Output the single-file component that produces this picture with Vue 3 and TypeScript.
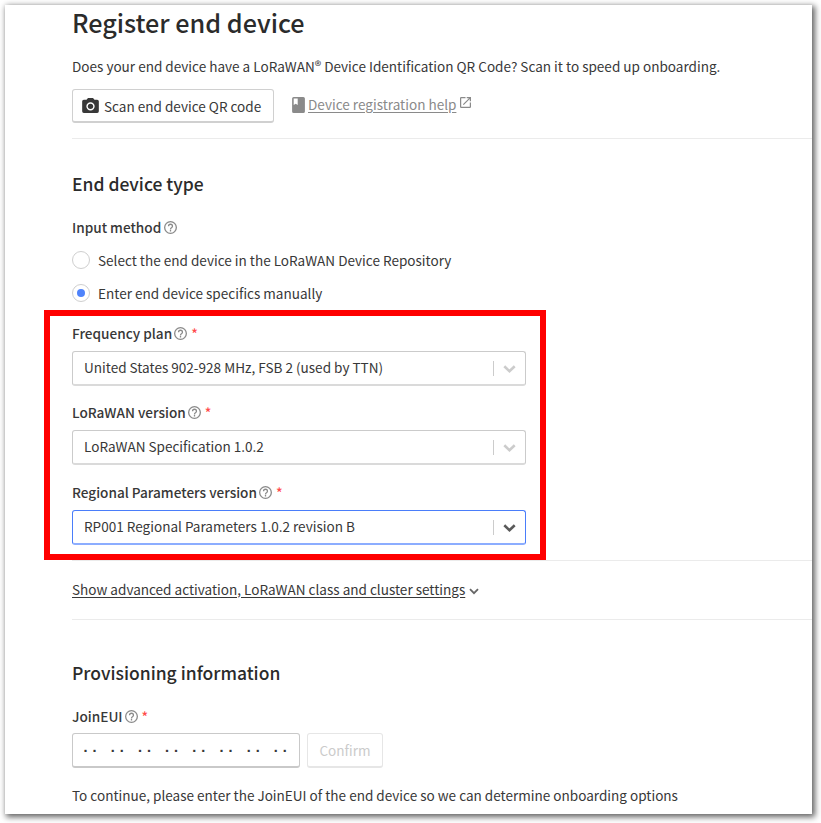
<script setup lang="ts">
import { ref } from 'vue'

interface SelectField {
  key: string
  label: string
  value: string
  focused: boolean
}

const methods = [
  { key: 'repository', label: 'Select the end device in the LoRaWAN Device Repository' },
  { key: 'manual', label: 'Enter end device specifics manually' },
]
const method = ref('manual')

const fields: SelectField[] = [
  { key: 'frequency', label: 'Frequency plan', value: 'United States 902-928 MHz, FSB 2 (used by TTN)', focused: false },
  { key: 'version', label: 'LoRaWAN version', value: 'LoRaWAN Specification 1.0.2', focused: false },
  { key: 'regional', label: 'Regional Parameters version', value: 'RP001 Regional Parameters 1.0.2 revision B', focused: true },
]
</script>

<template>
  <main class="card">
    <h1>Register end device</h1>
    <p class="intro">Does your end device have a LoRaWAN<sup>®</sup> Device Identification QR Code? Scan it to speed up onboarding.</p>
    <div class="actions">
      <button class="scan">
        <svg class="camera" viewBox="2 2 20 18"><path fill-rule="evenodd" d="M9 2 7.200 4H4a2 2 0 0 0-2 2v12a2 2 0 0 0 2 2h16a2 2 0 0 0 2-2V6a2 2 0 0 0-2-2h-3.200L15 2zM12 7a5 5 0 1 1 0 10 5 5 0 0 1 0-10z" /><circle cx="12" cy="12" r="3.200" /></svg>
        <span>Scan end device QR code</span>
      </button>
      <a class="help-link">
        <svg class="book" viewBox="4 2 16 20"><path d="M18 2H6a2 2 0 0 0-2 2v16a2 2 0 0 0 2 2h12a2 2 0 0 0 2-2V4a2 2 0 0 0-2-2zM6 4h5v8l-2.500-1.500L6 12z" /></svg>
        <span>Device registration help</span>
        <svg class="external" viewBox="3 3 18 18"><path d="M19 19H5V5h7V3H5a2 2 0 0 0-2 2v14a2 2 0 0 0 2 2h14a2 2 0 0 0 2-2v-7h-2zM14 3v2h3.590l-9.830 9.830 1.410 1.410L19 6.410V10h2V3z" /></svg>
      </a>
    </div>
    <hr class="rule-top">

    <h2 class="type-title">End device type</h2>
    <div class="label method-label">
      <span>Input method</span>
      <svg class="hint" viewBox="2 2 20 20"><path d="M11 18h2v-2h-2zM12 2a10 10 0 1 0 0 20 10 10 0 0 0 0-20zm0 18a8 8 0 1 1 0-16 8 8 0 0 1 0 16zm0-14a4 4 0 0 0-4 4h2a2 2 0 1 1 4 0c0 2-3 1.750-3 5h2c0-2.250 3-2.500 3-5a4 4 0 0 0-4-4z" /></svg>
    </div>
    <div class="radios">
      <div v-for="m in methods" :key="m.key" class="radio-row" @click="method = m.key">
        <span class="radio"><i v-if="method === m.key" /></span>
        <span class="radio-text">{{ m.label }}</span>
      </div>
    </div>

    <section class="fields">
      <div v-for="f in fields" :key="f.key" class="field" :class="f.key">
        <div class="label">
          <span>{{ f.label }}</span>
          <svg class="hint" viewBox="2 2 20 20"><path d="M11 18h2v-2h-2zM12 2a10 10 0 1 0 0 20 10 10 0 0 0 0-20zm0 18a8 8 0 1 1 0-16 8 8 0 0 1 0 16zm0-14a4 4 0 0 0-4 4h2a2 2 0 1 1 4 0c0 2-3 1.750-3 5h2c0-2.250 3-2.500 3-5a4 4 0 0 0-4-4z" /></svg>
          <b>*</b>
        </div>
        <div class="select" :class="{ focused: f.focused }">
          <span class="value">{{ f.value }}</span>
          <span class="separator" />
          <svg class="chevron" viewBox="0 0 13 8"><path d="m1.300 1.200 5.200 5 5.200-5" /></svg>
        </div>
      </div>
    </section>

    <div class="advanced">
      <a>Show advanced activation, LoRaWAN class and cluster settings</a>
      <svg viewBox="0 0 10 7"><path d="m1 1.200 4 4 4-4" /></svg>
    </div>

    <h2 class="provision-title">Provisioning information</h2>
    <div class="label join-label">
      <span>JoinEUI</span>
      <svg class="hint" viewBox="2 2 20 20"><path d="M11 18h2v-2h-2zM12 2a10 10 0 1 0 0 20 10 10 0 0 0 0-20zm0 18a8 8 0 1 1 0-16 8 8 0 0 1 0 16zm0-14a4 4 0 0 0-4 4h2a2 2 0 1 1 4 0c0 2-3 1.750-3 5h2c0-2.250 3-2.500 3-5a4 4 0 0 0-4-4z" /></svg>
      <b>*</b>
    </div>
    <div class="join-row">
      <div class="eui"><span v-for="n in 8" :key="n">··</span></div>
      <button class="confirm" disabled>Confirm</button>
    </div>
    <p class="note">To continue, please enter the JoinEUI of the end device so we can determine onboarding options</p>
    <div class="highlight" />
  </main>
</template>

<style>
body {
  background: #fff;
  overflow: hidden;
}
</style>

<style scoped>
* {
  box-sizing: border-box;
}
.card {
  position: relative;
  display: flow-root;
  width: 807px;
  height: 809px;
  margin: 5px 0 9px 5px;
  padding-left: 67px;
  background: #fff;
  box-shadow: 2px 2px 6px 1px rgba(0, 0, 0, 0.62);
  color: #383838;
  font: 13.56px/20px "Noto Sans CJK SC", "Noto Sans", sans-serif;
  white-space: nowrap;
}
svg {
  display: block;
  flex: none;
  fill: currentColor;
}
h1,
h2,
p {
  margin: 0;
}
h1 {
  color: #2b2b2b;
  font-size: 25.2px;
  font-weight: 500;
  line-height: 34px;
}
h2 {
  height: 25px;
  color: #2b2b2b;
  font-size: 17.5px;
  font-weight: 500;
  line-height: 25px;
}
.intro {
  height: 20px;
  margin-top: 17px;
}
sup {
  font-size: 13.5px;
  line-height: 0;
  vertical-align: 1px;
}
.actions {
  display: flex;
  align-items: center;
  height: 34px;
  margin-top: 13px;
}
button {
  display: flex;
  align-items: center;
  height: 35px;
  margin: 0;
  padding: 0;
  border: 1px solid #d0d0d0;
  border-bottom-width: 2px;
  border-radius: 3px;
  background: #fff;
  color: inherit;
  font: inherit;
}
.scan {
  width: 202px;
  height: 34px;
  padding-left: 9px;
}
.camera {
  width: 17px;
  height: 15px;
  margin: -1px 5px 0 0;
}
.help-link {
  display: flex;
  align-items: center;
  height: 20px;
  margin: -4px 0 0 18px;
  color: #8a8a8a;
}
.help-link span {
  text-decoration: underline;
  text-underline-offset: 2px;
}
.book {
  width: 13px;
  height: 16px;
  margin: 1px 3px 0 0;
}
.external {
  width: 11px;
  height: 11px;
  margin: -3px 0 0 4px;
}
.rule-top {
  height: 1px;
  margin: 15px 0 0;
  border: 0;
  background: #ebebeb;
}
.type-title {
  margin-top: 32px;
}
.label {
  display: flex;
  align-items: center;
  height: 20px;
  font-size: 13.6px;
  font-weight: 500;
}
.hint {
  width: 13px;
  height: 13px;
  margin: 1px 0 0 2px;
  color: #8a8a8a;
}
.label b {
  margin-left: 4px;
  color: #ff4b4b;
  font-weight: 500;
}
.method-label {
  margin-top: 21px;
}
.method-label .hint {
  margin: 0 0 0 3px;
}
.radios {
  display: flex;
  flex-direction: column;
  gap: 13px;
  margin-top: 13px;
}
.radio-row {
  display: flex;
  align-items: center;
  gap: 8px;
  height: 20px;
}
.radio {
  display: flex;
  align-items: center;
  justify-content: center;
  width: 18px;
  height: 18px;
  border: 1px solid #cfcfcf;
  border-radius: 50%;
}
.radio i {
  width: 8px;
  height: 8px;
  border-radius: 50%;
  background: #4f83fb;
}
.fields {
  display: flex;
  flex-direction: column;
  width: 454px;
  margin-top: 20px;
}
.field {
  height: 79px;
}
.version {
  height: 80px;
}
.regional {
  height: 62px;
}
.select {
  display: flex;
  align-items: center;
  height: 35px;
  margin-top: 8px;
  padding: 0 9px 0 11px;
  border: 1px solid #cbcbcb;
  border-bottom: 2px solid #dadada;
  border-radius: 3px;
}
.select.focused {
  border: 1px solid #4a7dfa;
  border-bottom: 2px solid #8cadff;
}
.value {
  flex: 1;
  padding-bottom: 2px;
}
.separator {
  width: 1px;
  height: 15px;
  margin-right: 9px;
  background: #ccc;
}
.chevron {
  width: 13px;
  height: 8px;
  margin-top: 1px;
  fill: none;
  stroke: #ccc;
  stroke-width: 2.6;
}
.focused .chevron {
  stroke: #5a5a5a;
}
.advanced {
  display: flex;
  align-items: center;
  height: 60px;
  margin-top: 16px;
  padding-bottom: 3px;
  border-top: 1px solid #ebebeb;
  border-bottom: 1px solid #ebebeb;
}
.advanced a {
  text-decoration: underline;
  text-underline-offset: 2px;
}
.advanced svg {
  width: 10px;
  height: 7px;
  margin: 5px 0 0 4px;
  fill: none;
  stroke: #666;
  stroke-width: 1.8;
}
.provision-title {
  margin-top: 40px;
}
.join-label {
  margin-top: 21px;
}
.join-row {
  display: flex;
  gap: 7px;
  height: 35px;
  margin-top: 7px;
}
.eui {
  display: flex;
  align-items: center;
  width: 228px;
  padding: 4px 0 0 8px;
  border: 1px solid #c9c9c9;
  border-bottom-width: 2px;
  border-radius: 3px;
  font: 700 15px/20px "Liberation Mono", monospace;
}
.eui span {
  width: 27.2px;
}
.confirm {
  width: 76px;
  justify-content: center;
  border-color: #e6e6e6;
  color: #cbcbcb;
}
.note {
  margin-top: 17px;
}
.highlight {
  position: absolute;
  top: 305px;
  left: 39px;
  width: 502px;
  height: 250px;
  border: 6px solid #f00;
}
</style>
